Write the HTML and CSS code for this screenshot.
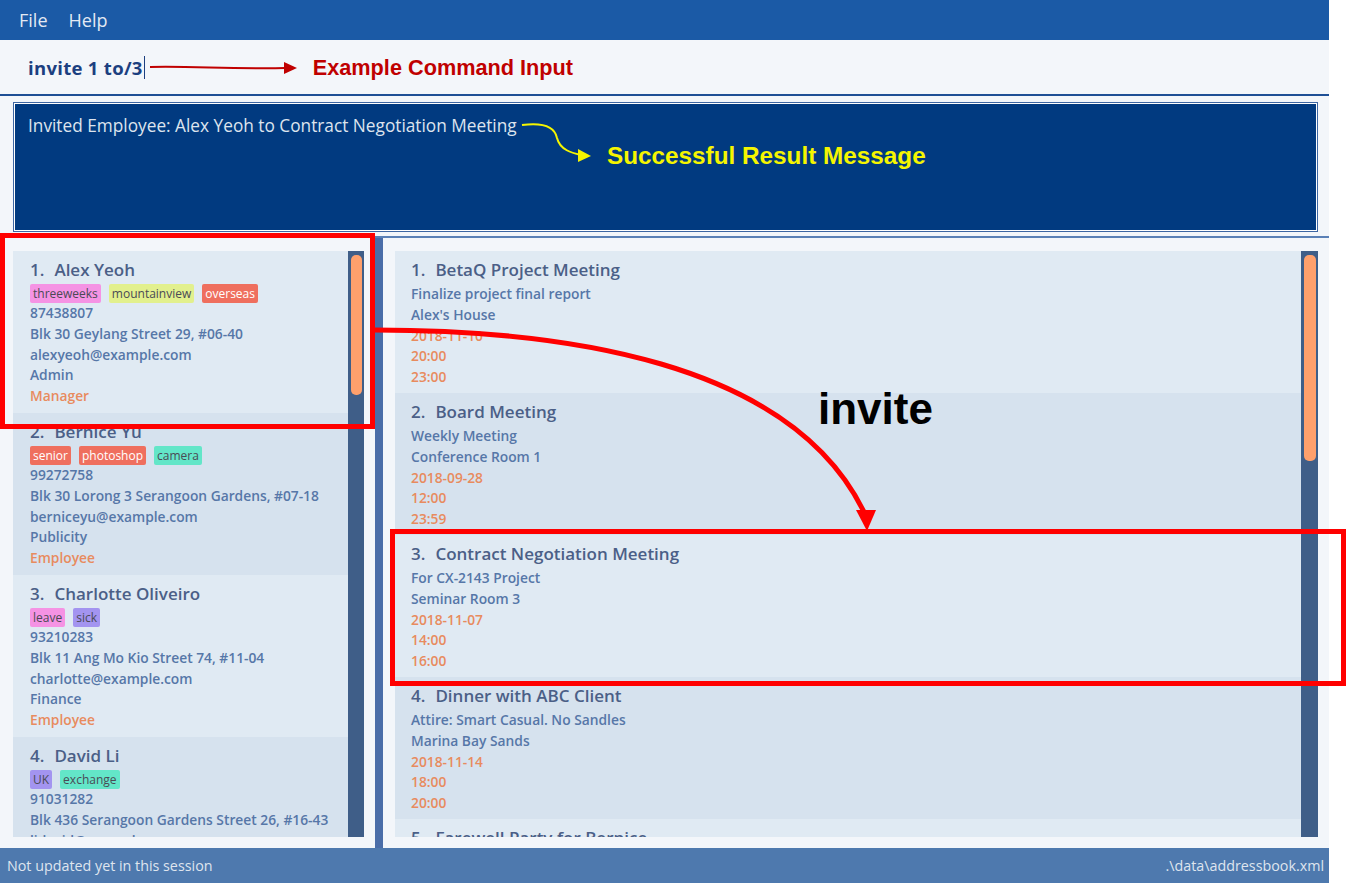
FILE: index.html
```html
<!DOCTYPE html>
<html>
<head>
<meta charset="utf-8">
<title>Address Book</title>
<link rel="stylesheet" href="styles.css">
</head>
<body>
<div class="app">
  <div class="menubar"><span class="menu">File</span><span class="menu">Help</span></div>
  <div class="command">
    <span class="cmd-text">invite 1 to/3</span><span class="caret"></span>
    <svg class="cmd-arrow" width="148" height="16" viewBox="0 0 148 16"><path d="M0 7 C40 6 80 9 135 8" fill="none" stroke="#c00000" stroke-width="2"/><path d="M134 2 L147 8 L134 14 Z" fill="#c00000"/></svg>
    <span class="note-red">Example Command Input</span>
  </div>
  <div class="result-area">
    <div class="result-box">Invited Employee: Alex Yeoh to Contract Negotiation Meeting</div>
  </div>
  <div class="main">
    <div class="pane pane-left">
      <div class="list">
        <div class="cards">
          <div class="card odd">
            <div class="name"><span class="num">1.</span>Alex Yeoh</div>
            <div class="tags"><span class="tag pink">threeweeks</span><span class="tag lime">mountainview</span><span class="tag red">overseas</span></div>
            <div class="line">87438807</div>
            <div class="line">Blk 30 Geylang Street 29, #06-40</div>
            <div class="line">alexyeoh@example.com</div>
            <div class="line">Admin</div>
            <div class="line orange">Manager</div>
          </div>
          <div class="card even">
            <div class="name"><span class="num">2.</span>Bernice Yu</div>
            <div class="tags"><span class="tag red">senior</span><span class="tag red">photoshop</span><span class="tag teal">camera</span></div>
            <div class="line">99272758</div>
            <div class="line">Blk 30 Lorong 3 Serangoon Gardens, #07-18</div>
            <div class="line">berniceyu@example.com</div>
            <div class="line">Publicity</div>
            <div class="line orange">Employee</div>
          </div>
          <div class="card odd">
            <div class="name"><span class="num">3.</span>Charlotte Oliveiro</div>
            <div class="tags"><span class="tag pink">leave</span><span class="tag violet">sick</span></div>
            <div class="line">93210283</div>
            <div class="line">Blk 11 Ang Mo Kio Street 74, #11-04</div>
            <div class="line">charlotte@example.com</div>
            <div class="line">Finance</div>
            <div class="line orange">Employee</div>
          </div>
          <div class="card even">
            <div class="name"><span class="num">4.</span>David Li</div>
            <div class="tags"><span class="tag violet">UK</span><span class="tag teal">exchange</span></div>
            <div class="line">91031282</div>
            <div class="line">Blk 436 Serangoon Gardens Street 26, #16-43</div>
            <div class="line">lidavid@example.com</div>
          </div>
        </div>
        <div class="scroll"><div class="thumb thumb-left"></div></div>
      </div>
    </div>
    <div class="divider"></div>
    <div class="pane pane-right">
      <div class="list">
        <div class="cards">
          <div class="card event odd">
            <div class="name"><span class="num">1.</span>BetaQ Project Meeting</div>
            <div class="lines">
              <div class="line">Finalize project final report</div>
              <div class="line">Alex's House</div>
              <div class="line orange">2018-11-10</div>
              <div class="line orange">20:00</div>
              <div class="line orange">23:00</div>
            </div>
          </div>
          <div class="card event even">
            <div class="name"><span class="num">2.</span>Board Meeting</div>
            <div class="lines">
              <div class="line">Weekly Meeting</div>
              <div class="line">Conference Room 1</div>
              <div class="line orange">2018-09-28</div>
              <div class="line orange">12:00</div>
              <div class="line orange">23:59</div>
            </div>
          </div>
          <div class="card event odd">
            <div class="name"><span class="num">3.</span>Contract Negotiation Meeting</div>
            <div class="lines">
              <div class="line">For CX-2143 Project</div>
              <div class="line">Seminar Room 3</div>
              <div class="line orange">2018-11-07</div>
              <div class="line orange">14:00</div>
              <div class="line orange">16:00</div>
            </div>
          </div>
          <div class="card event even">
            <div class="name"><span class="num">4.</span>Dinner with ABC Client</div>
            <div class="lines">
              <div class="line">Attire: Smart Casual. No Sandles</div>
              <div class="line">Marina Bay Sands</div>
              <div class="line orange">2018-11-14</div>
              <div class="line orange">18:00</div>
              <div class="line orange">20:00</div>
            </div>
          </div>
          <div class="card event odd">
            <div class="name"><span class="num">5.</span>Farewell Party for Bernice</div>
          </div>
        </div>
        <div class="scroll"><div class="thumb thumb-right"></div></div>
      </div>
    </div>
  </div>
  <div class="status"><span>Not updated yet in this session</span><span>.\data\addressbook.xml</span></div>
</div>
<svg class="overlay" width="1347" height="883" viewBox="0 0 1347 883">
  <path d="M522 125 C545 122 555 128 557 138 C560 150 572 153 581 155" fill="none" stroke="#f5f500" stroke-width="2"/>
  <path d="M578 149 L591 156 L578 162 Z" fill="#f5f500"/>
  <text x="607" y="164" class="note-yellow">Successful Result Message</text>
  <rect x="2.5" y="235.5" width="370" height="191" fill="none" stroke="#ff0000" stroke-width="5"/>
  <rect x="392.5" y="531.5" width="951" height="152" fill="none" stroke="#ff0000" stroke-width="5"/>
  <path d="M375 330 C560 330 790 360 864 512" fill="none" stroke="#ff0000" stroke-width="5"/>
  <path d="M856 510 L867 531 L876 510 Z" fill="#ff0000"/>
  <text x="818" y="424" class="note-black">invite</text>
</svg>
</body>
</html>
```

FILE: styles.css
```css
* { box-sizing: border-box; margin: 0; padding: 0; }

body {
  width: 1347px;
  height: 883px;
  background: #ffffff;
  font-family: "Open Sans", "Noto Sans", sans-serif;
  position: relative;
  overflow: hidden;
}

.app {
  width: 1329px;
  height: 883px;
  display: flex;
  flex-direction: column;
  background: #f3f6fa;
}

.menubar {
  height: 40px;
  flex: none;
  background: #1b5aa6;
  display: flex;
  align-items: center;
  gap: 21px;
  padding-left: 19px;
  color: #e3e9f3;
  font-size: 18px;
}

.command {
  height: 56px;
  flex: none;
  border-bottom: 2px solid #1e4f95;
  display: flex;
  align-items: center;
  padding-left: 28px;
  padding-top: 1px;
}

.cmd-text {
  font-weight: 700;
  font-size: 18.5px;
  letter-spacing: 0.3px;
  color: #1c3f80;
}

.caret {
  width: 1px;
  height: 23px;
  background: #1c3f80;
  margin-left: 1px;
}

.cmd-arrow { margin-left: 5px; }

.note-red {
  font-family: "Liberation Sans", Arial, sans-serif;
  font-weight: 700;
  font-size: 21.7px;
  color: #c00000;
  margin-left: 15px;
}

.result-area {
  height: 140px;
  flex: none;
  padding: 6px 11px 4px 13px;
}

.result-box {
  height: 130px;
  background: #013a80;
  border: 1px solid #3d66a3;
  box-shadow: inset 0 0 0 1px #ffffff;
  padding: 11px 0 0 14px;
  color: #dde4ee;
  font-size: 17.25px;
  line-height: 24px;
}

.main {
  flex: 1;
  display: flex;
  border-top: 2px solid #5a80b6;
  min-height: 0;
}

.pane {
  padding: 13px 11px 11px 13px;
  display: flex;
}

.pane-left { width: 375px; flex: none; }
.pane-right { flex: 1; padding-left: 12px; }

.divider {
  width: 8px;
  flex: none;
  background: #4a6da8;
}

.list {
  flex: 1;
  display: flex;
  min-width: 0;
  overflow: hidden;
}

.cards {
  flex: 1;
  overflow: hidden;
  min-width: 0;
}

.scroll {
  width: 16px;
  flex: none;
  background: #3f5e88;
  padding: 4px 2px 0 3px;
}

.pane-right .scroll { width: 17px; }

.thumb {
  background: #ffa06c;
  border-radius: 5px;
}

.thumb-left { height: 140px; }
.thumb-right { height: 206px; }

.card {
  padding: 7px 0 6px 17px;
  height: 162px;
}

.card.event {
  height: 142px;
  padding-left: 16px;
}

.odd { background: #e0eaf3; }
.even { background: #d6e2ee; }

.name {
  font-size: 17px;
  font-weight: 600;
  color: #4b5f87;
  line-height: 24px;
  white-space: nowrap;
}

.num { margin-right: 10px; }

.tags {
  display: flex;
  gap: 8px;
  margin-top: 2px;
}

.tag {
  height: 19px;
  line-height: 19px;
  font-size: 12px;
  padding: 0 3px;
  border-radius: 2px;
  color: #4a4a55;
}

.pink { background: #f593e4; }
.lime { background: #e2f08d; }
.red { background: #ef6f5e; color: #ffffff; }
.teal { background: #63e6c8; }
.violet { background: #a394f0; }

.line {
  font-size: 13.8px;
  font-weight: 600;
  color: #5677a8;
  line-height: 20.8px;
  white-space: nowrap;
}

.lines { margin-top: 2px; }

.orange { color: #e88b5e; }

.status {
  height: 35px;
  flex: none;
  background: #4e79ae;
  display: flex;
  justify-content: space-between;
  align-items: center;
  padding: 0 5px 0 7px;
  font-size: 14.3px;
  color: #dfe5ee;
}

.overlay {
  position: absolute;
  top: 0;
  left: 0;
  pointer-events: none;
}

.note-yellow {
  font-family: "Liberation Sans", Arial, sans-serif;
  font-weight: 700;
  font-size: 24.3px;
  fill: #f5f500;
}

.note-black {
  font-family: "Liberation Sans", Arial, sans-serif;
  font-weight: 700;
  font-size: 44px;
  fill: #000000;
}
```
